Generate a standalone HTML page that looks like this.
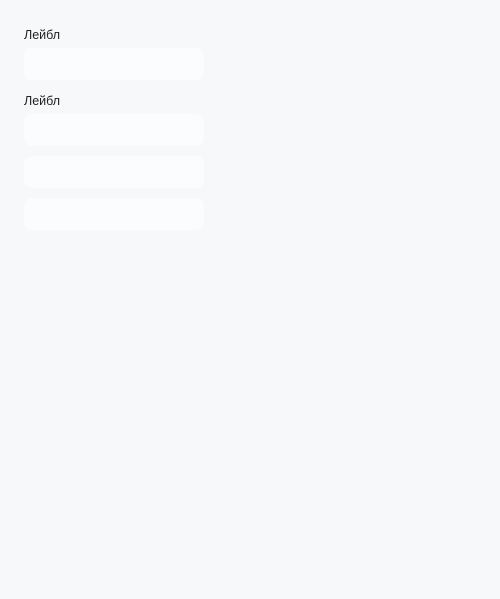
<!DOCTYPE html>
<html><head><meta charset="utf-8"><style>
html,body{margin:0;padding:0;width:500px;height:599px;background:#f7f8fa;font-family:"Liberation Sans","DejaVu Sans",sans-serif;}
.l{position:absolute;left:24px;font-size:12.5px;color:#222;line-height:14px;}
.b{position:absolute;left:24px;width:180px;height:32px;border-radius:8px;background:#fbfcfd;}
</style></head><body>
<div class="l" style="top:28px">Лейбл</div>
<div class="b" style="top:48px"></div>
<div class="l" style="top:94px">Лейбл</div>
<div class="b" style="top:114px"></div>
<div class="b" style="top:156px"></div>
<div class="b" style="top:198px"></div>
</body></html>
